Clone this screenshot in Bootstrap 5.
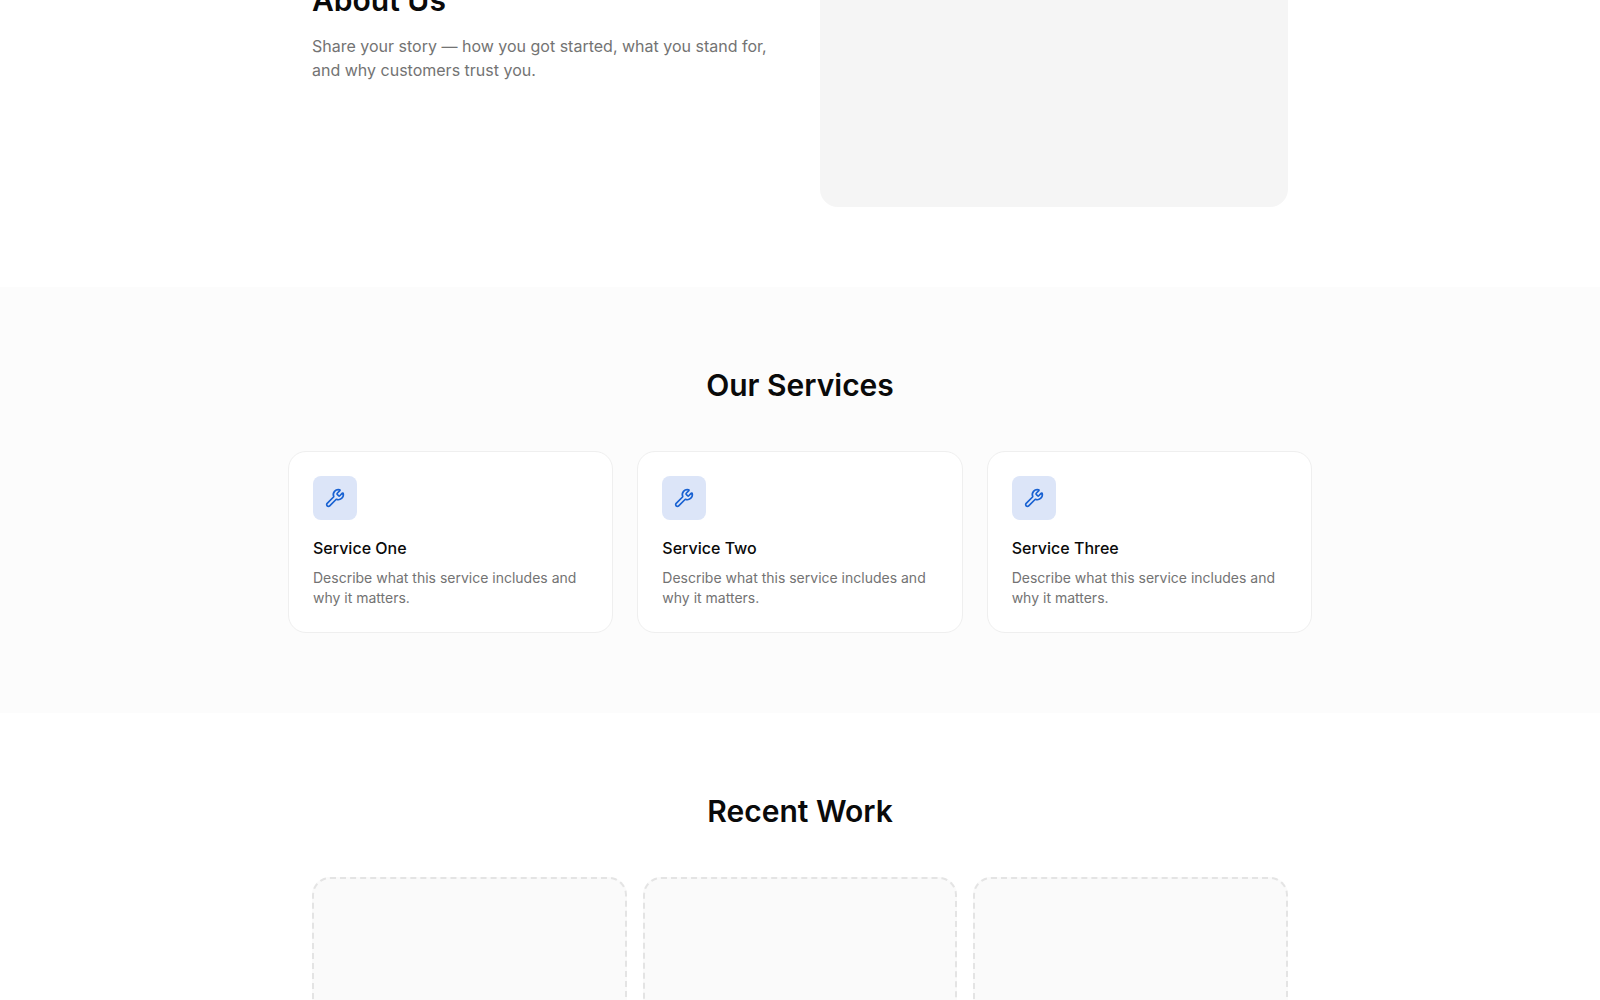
<!DOCTYPE html>
<html lang="en">
<head>
<meta charset="utf-8">
<meta name="viewport" content="width=device-width, initial-scale=1">
<title>About Us</title>
<link href="https://cdn.jsdelivr.net/npm/bootstrap@5.3.0/dist/css/bootstrap.min.css" rel="stylesheet">
<style>
  body { font-family: Inter, "Liberation Sans", sans-serif; line-height: 24px; color: #0a0a0a; background: #fff; }
  .page-view { height: 100vh; }
  .wrap { max-width: 1024px; }
  .section-pad { padding-top: 80px; padding-bottom: 80px; }
  .section-title { font-size: 30px; line-height: 36px; font-weight: 600; }
  .copy-muted { color: #737373; }
  /* the view opens part of the way down the About section */
  .about { margin-top: -224px; }
  .about-grid { --bs-gutter-x: 40px; }
  .about-media { aspect-ratio: 4 / 3; background: #f5f5f5; border-radius: 18px; }
  .services { background: #fcfcfc; }
  .service-card { border: 1px solid #efefef; border-radius: 18px; }
  .service-icon { width: 44px; height: 44px; border-radius: 8px; background: #dce5f8; color: #1861d2; }
  .service-name { font-size: 16px; line-height: 24px; font-weight: 500; }
  .service-text { font-size: 14px; line-height: 20px; }
  .work-tile { aspect-ratio: 4 / 3; border: 2px dashed #e4e4e4; border-radius: 18px; background: #fafafa; }
</style>
</head>
<body>
<svg class="d-none" xmlns="http://www.w3.org/2000/svg">
  <symbol id="wrench" viewBox="0 0 24 24" fill="none" stroke="currentColor" stroke-width="2" stroke-linecap="round" stroke-linejoin="round">
    <path d="M14.7 6.3a1 1 0 0 0 0 1.4l1.6 1.6a1 1 0 0 0 1.4 0l3.106-3.105c.32-.322.863-.22.983.218a6 6 0 0 1-8.259 7.057l-7.91 7.91a1 1 0 0 1-2.999-3l7.91-7.91a6 6 0 0 1 7.057-8.259c.438.12.54.662.219.984z"/>
  </symbol>
</svg>
<main class="page-view overflow-hidden">
  <section class="about section-pad">
    <div class="wrap mx-auto px-4">
      <div class="row about-grid align-items-center">
        <div class="col-6">
          <h2 class="section-title mb-3">About Us</h2>
          <p class="copy-muted mb-0">Share your story — how you got started, what you stand for, and why customers trust you.</p>
        </div>
        <div class="col-6">
          <div class="about-media"></div>
        </div>
      </div>
    </div>
  </section>

  <section class="services section-pad">
    <h2 class="section-title text-center mb-5">Our Services</h2>
    <div class="wrap mx-auto">
      <div class="row row-cols-3 gx-4">
        <div class="col">
          <article class="service-card bg-white p-4">
            <div class="service-icon d-flex align-items-center justify-content-center mb-3"><svg width="20" height="20" aria-hidden="true"><use href="#wrench"/></svg></div>
            <h3 class="service-name mb-2">Service One</h3>
            <p class="service-text copy-muted mb-0">Describe what this service includes and why it matters.</p>
          </article>
        </div>
        <div class="col">
          <article class="service-card bg-white p-4">
            <div class="service-icon d-flex align-items-center justify-content-center mb-3"><svg width="20" height="20" aria-hidden="true"><use href="#wrench"/></svg></div>
            <h3 class="service-name mb-2">Service Two</h3>
            <p class="service-text copy-muted mb-0">Describe what this service includes and why it matters.</p>
          </article>
        </div>
        <div class="col">
          <article class="service-card bg-white p-4">
            <div class="service-icon d-flex align-items-center justify-content-center mb-3"><svg width="20" height="20" aria-hidden="true"><use href="#wrench"/></svg></div>
            <h3 class="service-name mb-2">Service Three</h3>
            <p class="service-text copy-muted mb-0">Describe what this service includes and why it matters.</p>
          </article>
        </div>
      </div>
    </div>
  </section>

  <section class="section-pad">
    <div class="wrap mx-auto px-4">
      <h2 class="section-title text-center mb-5">Recent Work</h2>
      <div class="row row-cols-3 gx-3">
        <div class="col"><div class="work-tile"></div></div>
        <div class="col"><div class="work-tile"></div></div>
        <div class="col"><div class="work-tile"></div></div>
      </div>
    </div>
  </section>
</main>
<script src="https://cdn.jsdelivr.net/npm/bootstrap@5.3.0/dist/js/bootstrap.bundle.min.js"></script>
</body>
</html>
